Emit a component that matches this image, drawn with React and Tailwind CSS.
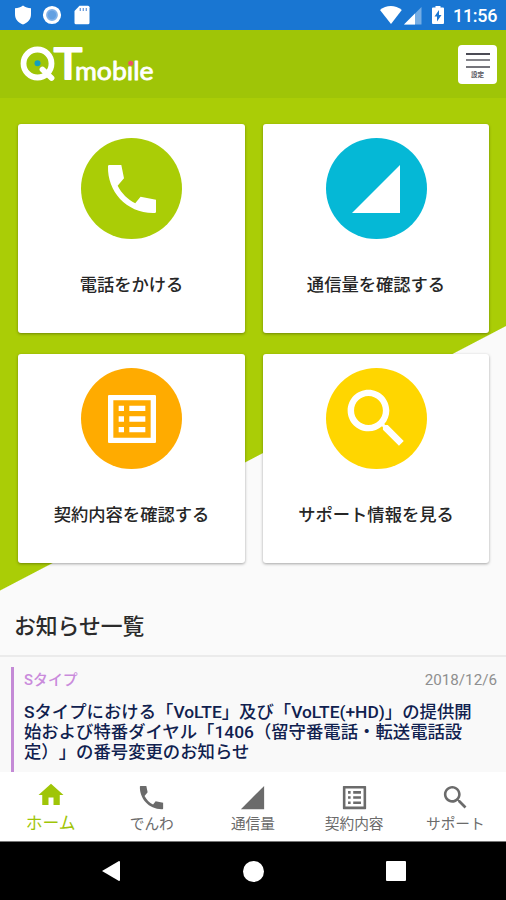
import React from "react";

const PHONE =
  "M6.62 10.79c1.44 2.83 3.76 5.14 6.59 6.59l2-2.500L21 16V20.500q0 .5-.5.5C10 21.300 2.700 13 3 3.500q0-.5.5-.5H8L9 8z";
const SIGNAL = "M3 21h18V3z";
const LIST =
  "M19 5v14H5V5h14m1.500-2H3.500c-.3 0-.5.2-.5.5v17c0 .3.200.5.500.5h17c.3 0 .5-.200.5-.5V3.500c0-.3-.200-.5-.5-.5zM11 7h6v2h-6V7zm0 4h6v2h-6v-2zm0 4h6v2h-6v-2zM7 7h2v2H7V7zm0 4h2v2H7v-2zm0 4h2v2H7v-2z";
const SEARCH =
  "M15.5 14h-.79l-.28-.27C15.41 12.59 16 11.11 16 9.5 16 5.91 13.09 3 9.5 3S3 5.91 3 9.5 5.91 16 9.5 16c1.61 0 3.09-.59 4.23-1.57l.27.28v.79l5 4.99L20.49 19l-4.99-5zm-6 0C7.01 14 5 11.99 5 9.5S7.01 5 9.5 5 14 7.01 14 9.5 11.99 14 9.5 14z";
const HOME = "M10 20v-6h4v6h5v-8h3L12 3 2 12h3v8z";

function Icon({ d, className }) {
  return (
    <svg viewBox="0 0 24 24" fill="currentColor" className={className}>
      <path d={d} />
    </svg>
  );
}

function StatusBar() {
  return (
    <div className="flex h-[30px] shrink-0 items-center bg-[#1976d2] pl-[14px] pr-[9px] text-white">
      <svg viewBox="0 0 18 20" className="h-5 w-[18px]" fill="currentColor">
        <path d="M9 .5C6.5 2.5 4 3.2 1 3.2V9c0 5.500 3 8.500 8 10.500 5-2 8-5 8-10.500V3.200C14 3.200 11.500 2.500 9 .500z" />
      </svg>
      <svg viewBox="0 0 20 20" className="ml-[10px] h-5 w-5">
        <circle cx="10" cy="10" r="7.500" fill="#7fb1e8" stroke="#fff" strokeWidth="3.200" />
        <circle cx="10" cy="10" r="4.200" fill="#62a0e2" />
      </svg>
      <svg viewBox="0 0 16 20" className="ml-[12px] h-5 w-4">
        <path fill="#fff" d="M5.500.800H14q1.500 0 1.500 1.500v15.500q0 1.500-1.500 1.500H2q-1.500 0-1.500-1.500V6z" />
        <path stroke="#6d9ddc" strokeWidth="1.300" d="M6.300 3v3M9.300 3v3M12.300 3v3" />
      </svg>
      <div className="grow" />
      <svg viewBox="0 0 24 20" className="mr-px h-5 w-6" fill="currentColor">
        <path d="M1 5C7-.200 16.500-.200 22.800 5L12 19z" />
      </svg>
      <svg viewBox="0 0 18 19" className="h-[19px] w-[18px]">
        <path fill="#75ade4" d="M0 18.500h17.500V1z" />
        <path fill="#fff" d="M0 18.500h11V7.500z" />
      </svg>
      <svg viewBox="0 0 12 20" className="ml-[10px] mr-[9px] h-5 w-3">
        <path fill="#fff" d="M3.500 2.500V1h5v1.500H11q1 0 1 1V18q0 1-1 1H1q-1 0-1-1V3.500q0-1 1-1z" />
        <path fill="#1976d2" d="M7 5v5h2.500L5 16.500v-5H2.500z" />
      </svg>
      <span className="w-[44px] whitespace-nowrap pt-px font-[Roboto] text-[18px] font-medium leading-[20px] tracking-[-0.3px]">
        11:56
      </span>
    </div>
  );
}

function Logo() {
  return (
    <svg viewBox="0 0 136 44" className="h-11 w-[136px] overflow-visible">
      <g fill="none" stroke="#fff" strokeWidth="5.800" strokeLinecap="round" strokeLinejoin="round">
        <circle cx="17.500" cy="21.500" r="14" />
        <path d="M22.500 27.500L31.500 36" />
      </g>
      <g fill="#fff" stroke="#fff" strokeLinejoin="round" fontFamily="Lato, sans-serif">
        <text
          x="34"
          y="37.200"
          fontSize="43"
          fontWeight="400"
          strokeWidth="2.200"
          textLength="28"
          lengthAdjust="spacingAndGlyphs"
        >
          T
        </text>
        <text
          x="55"
          y="38"
          fontSize="24.500"
          fontWeight="400"
          strokeWidth=".8"
          textLength="78.500"
          lengthAdjust="spacingAndGlyphs"
        >
          mobıle
        </text>
      </g>
      <circle cx="17.500" cy="21.300" r="3" fill="#149fbd" />
      <circle cx="110.700" cy="21.300" r="2.500" fill="#ef5365" />
    </svg>
  );
}

function Header() {
  return (
    <header className="flex h-[68px] shrink-0 items-center justify-between bg-[#9fc507] pl-5 pr-[9px]">
      <Logo />
      <button className="flex h-[39px] w-[39px] flex-col items-center rounded-[4px] bg-white pt-2">
        <span className="h-[2px] w-6 bg-[#4b4b55]" />
        <span className="mt-1 h-[2px] w-6 bg-[#85858b]" />
        <span className="mt-[5px] h-[2px] w-6 bg-[#75757b]" />
        <span className="mt-[3px] text-[6.500px] font-bold leading-[8px] text-[#55555c]">設定</span>
      </button>
    </header>
  );
}

function Card({ circle, label, children }) {
  return (
    <div className="flex h-[209px] flex-col items-center rounded-[3px] bg-white pt-[14px] shadow-[0_1px_3px_rgba(0,0,0,0.35)]">
      <div className={`flex h-[101px] w-[101px] shrink-0 items-center justify-center rounded-full text-white ${circle}`}>
        {children}
      </div>
      <p className="mt-[34px] text-[17.300px] font-medium leading-6 text-[#262626]">{label}</p>
    </div>
  );
}

function Tab({ d, label, active }) {
  return (
    <div
      className={`flex w-[101.200px] flex-col items-center whitespace-nowrap ${
        active ? "pt-[8px] text-[#9fc507]" : "pt-[10px] text-[#6b6b6b]"
      }`}
    >
      <Icon d={d} className={active ? "h-[30px] w-[30px]" : "h-[31px] w-[31px]"} />
      <span className={active ? "mt-[2px] text-[16.800px] leading-[22px]" : "mt-[1px] text-[14.700px] leading-[20px]"}>
        {label}
      </span>
    </div>
  );
}

export default function App() {
  return (
    <div className="flex h-[900px] w-[506px] flex-col overflow-hidden bg-[#fafafa] font-[Roboto,'Noto_Sans_CJK_JP',sans-serif] [text-spacing-trim:space-all]">
      <StatusBar />
      <Header />

      <section className="h-[557px] shrink-0 bg-[linear-gradient(152.4deg,#aacd06_436px,#fafafa_437px)]">
        <div className="grid grid-cols-[227px_226px] gap-x-[18px] gap-y-[21px] pl-[18px] pt-[26px]">
          <Card circle="bg-[#aacd06]" label="電話をかける">
            <Icon d={PHONE} className="h-16 w-16" />
          </Card>
          <Card circle="bg-[#05b8d6]" label="通信量を確認する">
            <Icon d={SIGNAL} className="h-16 w-16" />
          </Card>
          <Card circle="bg-[#ffab00]" label="契約内容を確認する">
            <Icon d={LIST} className="h-16 w-16" />
          </Card>
          <Card circle="bg-[#ffd600]" label="サポート情報を見る">
            <Icon d={SEARCH} className="h-[77px] w-[77px]" />
          </Card>
        </div>
        <h2 className="mt-[48px] pl-[14px] text-[21.800px] font-medium leading-8 text-[#2b2b2b]">お知らせ一覧</h2>
      </section>

      <section className="h-[117px] shrink-0 border-t-2 border-[#ebebeb] bg-[#f9f9f9] pl-[11px] pt-[10px]">
        <div className="h-[105px] border-l-[3px] border-[#c48ad6] pl-[10px] pr-[9px]">
          <div className="flex items-center justify-between pt-[3px] leading-5">
            <span className="text-[14.900px] font-medium text-[#ca8bdc]">Sタイプ</span>
            <time className="text-[15.200px] text-[#8f8f8f]">2018/12/6</time>
          </div>
          <p className="mt-[12px] whitespace-nowrap text-[17.370px] font-medium leading-5 text-[#10214f]">
            Sタイプにおける「VoLTE」及び「VoLTE(+HD)」の提供開
            <br />
            始および特番ダイヤル「1406（留守番電話・転送電話設
            <br />
            定）」の番号変更のお知らせ
          </p>
        </div>
      </section>

      <nav className="flex h-[70px] shrink-0 border-b border-[#777] bg-white">
        <Tab d={HOME} label="ホーム" active />
        <Tab d={PHONE} label="でんわ" />
        <Tab d={SIGNAL} label="通信量" />
        <Tab d={LIST} label="契約内容" />
        <Tab d={SEARCH} label="サポート" />
      </nav>

      <div className="flex h-[58px] shrink-0 items-center bg-black pl-[101px]">
        <svg viewBox="0 0 20 22" className="h-[22px] w-5" fill="#fff">
          <path d="M1 11L18 1q1 0 1 1v18q0 1-1 1z" />
        </svg>
        <span className="ml-[122px] h-[21px] w-[21px] rounded-full bg-white" />
        <span className="ml-[122px] h-5 w-5 rounded-[1px] bg-white" />
      </div>
    </div>
  );
}
